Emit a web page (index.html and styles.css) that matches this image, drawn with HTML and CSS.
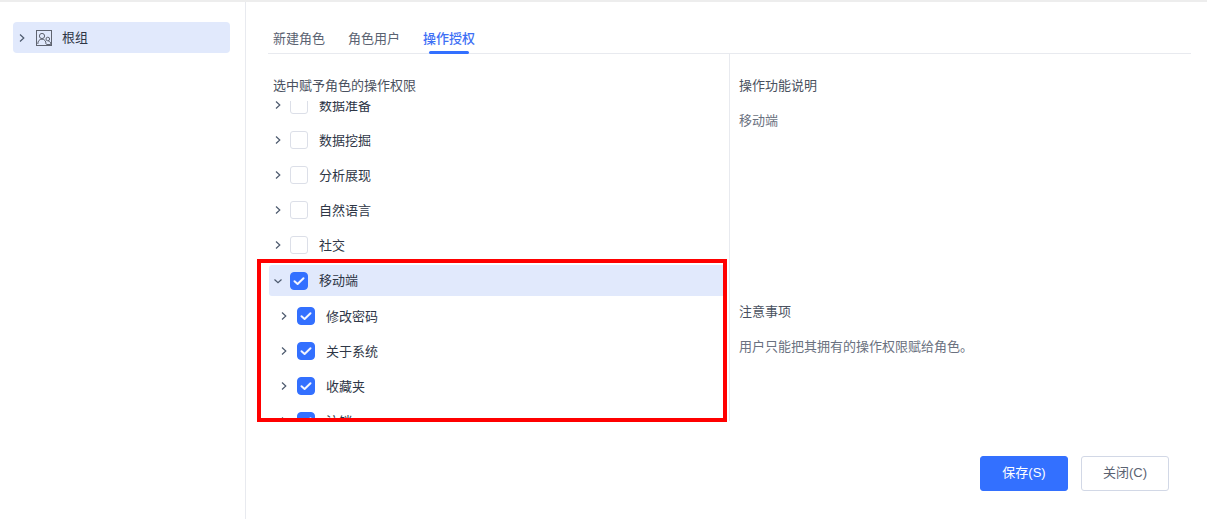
FILE: index.html
```html
<!DOCTYPE html>
<html lang="zh-CN">
<head>
<meta charset="utf-8">
<title>操作授权</title>
<link rel="stylesheet" href="styles.css">
</head>
<body>
<div class="app">
  <aside class="side">
    <div class="group-row">
      <svg class="chev" width="10" height="10" viewBox="0 0 10 10"><path d="M3 1.500 6.800 5 3 8.500" fill="none" stroke="#4d5a6e" stroke-width="1.200"/></svg>
      <svg class="group-icon" width="16" height="16" viewBox="0 0 16 16" fill="none" stroke="#5f6470" stroke-width="1"><rect x=".5" y=".5" width="15" height="15"/><circle cx="6" cy="6" r="2.600"/><path d="M1.800 14c0-3 1.600-4.800 4.200-4.800S10 11 10 14"/><circle cx="11.800" cy="9" r="1.800"/><path d="M10.300 14.500h4.500c0-2-.8-3.400-2.500-3.400"/></svg>
      <span class="group-name">根组</span>
    </div>
  </aside>
  <main class="main">
    <nav class="tabs">
      <span class="tab">新建角色</span>
      <span class="tab">角色用户</span>
      <span class="tab tab-active">操作授权</span>
    </nav>
    <div class="panes">
      <section class="left">
        <h3 class="title">选中赋予角色的操作权限</h3>
        <div class="tree">
          <div class="tree-inner">
            <div class="node"><svg class="chev" width="10" height="10" viewBox="0 0 10 10"><path d="M3 1.500 6.800 5 3 8.500" fill="none" stroke="#4d5a6e" stroke-width="1.200"/></svg><span class="box"></span><span class="label">数据准备</span></div>
            <div class="node"><svg class="chev" width="10" height="10" viewBox="0 0 10 10"><path d="M3 1.500 6.800 5 3 8.500" fill="none" stroke="#4d5a6e" stroke-width="1.200"/></svg><span class="box"></span><span class="label">数据挖掘</span></div>
            <div class="node"><svg class="chev" width="10" height="10" viewBox="0 0 10 10"><path d="M3 1.500 6.800 5 3 8.500" fill="none" stroke="#4d5a6e" stroke-width="1.200"/></svg><span class="box"></span><span class="label">分析展现</span></div>
            <div class="node"><svg class="chev" width="10" height="10" viewBox="0 0 10 10"><path d="M3 1.500 6.800 5 3 8.500" fill="none" stroke="#4d5a6e" stroke-width="1.200"/></svg><span class="box"></span><span class="label">自然语言</span></div>
            <div class="node"><svg class="chev" width="10" height="10" viewBox="0 0 10 10"><path d="M3 1.500 6.800 5 3 8.500" fill="none" stroke="#4d5a6e" stroke-width="1.200"/></svg><span class="box"></span><span class="label">社交</span></div>
            <div class="node node-selected"><svg class="chev" width="10" height="10" viewBox="0 0 10 10"><path d="M1.500 3.500 5 6.800 8.500 3.500" fill="none" stroke="#4d5a6e" stroke-width="1.200"/></svg><span class="box box-on"><svg width="12" height="12" viewBox="0 0 12 12"><path d="M1.500 6.200 4.600 9 10.500 3.200" fill="none" stroke="#f2f5ff" stroke-width="2" stroke-linecap="round" stroke-linejoin="round"/></svg></span><span class="label">移动端</span></div>
            <div class="node node-child"><svg class="chev" width="10" height="10" viewBox="0 0 10 10"><path d="M3 1.500 6.800 5 3 8.500" fill="none" stroke="#4d5a6e" stroke-width="1.200"/></svg><span class="box box-on"><svg width="12" height="12" viewBox="0 0 12 12"><path d="M1.500 6.200 4.600 9 10.500 3.200" fill="none" stroke="#f2f5ff" stroke-width="2" stroke-linecap="round" stroke-linejoin="round"/></svg></span><span class="label">修改密码</span></div>
            <div class="node node-child"><svg class="chev" width="10" height="10" viewBox="0 0 10 10"><path d="M3 1.500 6.800 5 3 8.500" fill="none" stroke="#4d5a6e" stroke-width="1.200"/></svg><span class="box box-on"><svg width="12" height="12" viewBox="0 0 12 12"><path d="M1.500 6.200 4.600 9 10.500 3.200" fill="none" stroke="#f2f5ff" stroke-width="2" stroke-linecap="round" stroke-linejoin="round"/></svg></span><span class="label">关于系统</span></div>
            <div class="node node-child"><svg class="chev" width="10" height="10" viewBox="0 0 10 10"><path d="M3 1.500 6.800 5 3 8.500" fill="none" stroke="#4d5a6e" stroke-width="1.200"/></svg><span class="box box-on"><svg width="12" height="12" viewBox="0 0 12 12"><path d="M1.500 6.200 4.600 9 10.500 3.200" fill="none" stroke="#f2f5ff" stroke-width="2" stroke-linecap="round" stroke-linejoin="round"/></svg></span><span class="label">收藏夹</span></div>
            <div class="node node-child"><svg class="chev" width="10" height="10" viewBox="0 0 10 10"><path d="M3 1.500 6.800 5 3 8.500" fill="none" stroke="#4d5a6e" stroke-width="1.200"/></svg><span class="box box-on"><svg width="12" height="12" viewBox="0 0 12 12"><path d="M1.500 6.200 4.600 9 10.500 3.200" fill="none" stroke="#f2f5ff" stroke-width="2" stroke-linecap="round" stroke-linejoin="round"/></svg></span><span class="label">注销</span></div>
          </div>
        </div>
        <div class="highlight"></div>
      </section>
      <section class="right">
        <div class="info">
          <h3 class="title">操作功能说明</h3>
          <p class="desc">移动端</p>
        </div>
        <div class="info">
          <h3 class="title">注意事项</h3>
          <p class="desc">用户只能把其拥有的操作权限赋给角色。</p>
        </div>
      </section>
    </div>
    <footer class="actions">
      <button class="btn btn-primary">保存(S)</button>
      <button class="btn">关闭(C)</button>
    </footer>
  </main>
</div>
</body>
</html>
```
FILE: styles.css
```css
* { box-sizing: border-box; }
html, body { margin: 0; height: 100%; }
body {
  font-family: "Liberation Sans", "Noto Sans CJK SC", sans-serif;
  font-size: 13px;
  color: #2e3646;
  background: #fff;
  overflow: hidden;
}
.app {
  display: flex;
  height: 519px;
  border-top: 2px solid #ededed;
}
.side {
  width: 246px;
  flex: none;
  border-right: 1px solid #e8eaef;
  padding: 20px 15px 0 13px;
}
.group-row {
  display: flex;
  align-items: center;
  height: 31px;
  padding-left: 4px;
  background: #e1e9fc;
  border-radius: 4px;
}
.chev { flex: none; display: block; }
.group-icon { margin-left: 9px; flex: none; }
.group-name { margin-left: 10px; padding-bottom: 2px; }
.main {
  flex: 1;
  min-width: 0;
  padding: 0 16px 0 22px;
  position: relative;
}
.tabs {
  display: flex;
  gap: 23px;
  height: 35px;
  margin-top: 17px;
  padding-left: 5px;
  border-bottom: 1px solid #e8eaef;
  color: #5a6271;
}
.tab {
  position: relative;
  height: 34px;
  line-height: 40px;
}
.tab-active {
  color: #3e6ff5;
  font-weight: 500;
}
.tab-active::after {
  content: "";
  position: absolute;
  left: 6px;
  right: 6px;
  bottom: -1px;
  height: 3px;
  border-radius: 2px;
  background: #3370ff;
}
.panes {
  display: flex;
  height: 367px;
}
.left {
  position: relative;
  width: 462px;
  flex: none;
  padding-top: 21px;
  border-right: 1px solid #e8eaef;
}
.title {
  margin: 0;
  padding-left: 5px;
  font-size: 13px;
  font-weight: 400;
  line-height: 22px;
  color: #4a5160;
}
.tree {
  margin-top: 4px;
  height: 319px;
  overflow: hidden;
}
.tree-inner { margin-top: -12px; }
.node {
  display: flex;
  align-items: center;
  height: 31px;
  margin-bottom: 4px;
  padding-left: 5px;
  border-radius: 3px;
}
.node-selected {
  background: #e1e9fc;
  margin-top: 5px;
  margin-bottom: 4px;
  margin-right: 3px;
  margin-left: 1px;
  padding-left: 4px;
}
.node-selected .label { padding-bottom: 2px; }
.node-child { padding-left: 11px; }
.node-child .box { margin-left: 8px; }
.box {
  flex: none;
  display: flex;
  align-items: center;
  justify-content: center;
  width: 18px;
  height: 18px;
  margin-left: 7px;
  border: 1px solid #dcdfe8;
  border-radius: 3px;
  background: #fff;
}
.box-on {
  background: #3370ff;
  border-color: #3370ff;
  border-radius: 4px;
}
.label { margin-left: 11px; }
.highlight {
  position: absolute;
  left: -11px;
  top: 205px;
  width: 470px;
  height: 163px;
  border: 4px solid #f00;
  pointer-events: none;
}
.right {
  flex: 1;
  min-width: 0;
  padding: 21px 0 0 4px;
}
.info { height: 226px; }
.desc {
  margin: 13px 0 0 5px;
  line-height: 22px;
  color: #6a7180;
}
.actions {
  display: flex;
  justify-content: flex-end;
  gap: 13px;
  padding: 35px 22px 0 0;
}
.btn {
  width: 88px;
  height: 35px;
  padding: 0 0 4px;
  font: inherit;
  color: #5a6271;
  background: #fff;
  border: 1px solid #d2d8e6;
  border-radius: 3px;
}
.btn-primary {
  color: #fff;
  background: #3370ff;
  border-color: #3370ff;
}
```
